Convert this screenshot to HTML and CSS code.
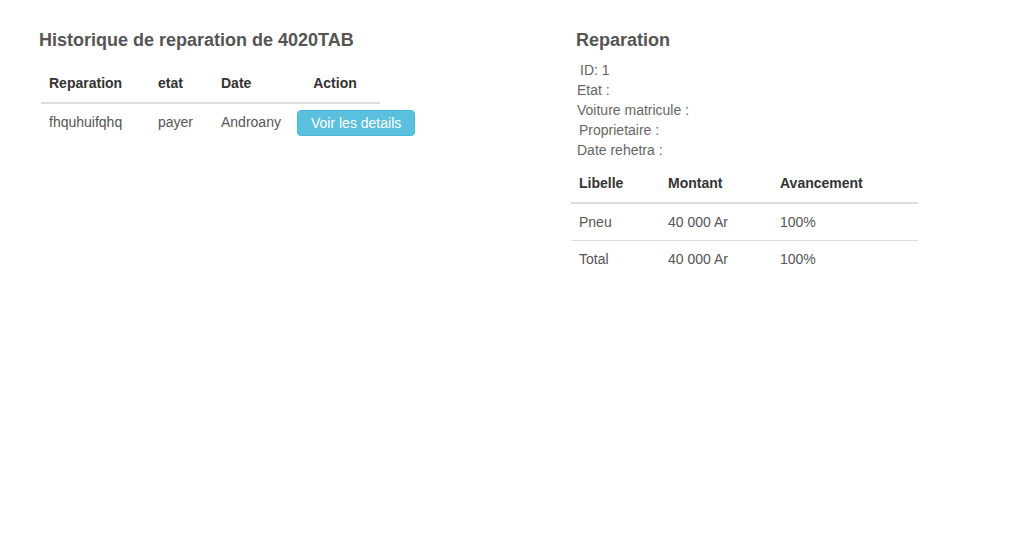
FILE: index.html
```html
<!DOCTYPE html>
<html lang="fr">
<head>
<meta charset="utf-8">
<title>Historique de reparation</title>
<link rel="stylesheet" href="styles.css">
</head>
<body>
<div class="page">
  <section class="col col-left">
    <h2 class="title title-left">Historique de reparation de 4020TAB</h2>
    <table class="tbl tbl-history">
      <colgroup>
        <col class="c1"><col class="c2"><col class="c3"><col class="c4">
      </colgroup>
      <thead>
        <tr><th>Reparation</th><th>etat</th><th>Date</th><th class="center">Action</th></tr>
      </thead>
      <tbody>
        <tr>
          <td>fhquhuifqhq</td>
          <td>payer</td>
          <td>Androany</td>
          <td><a class="btn-info" href="#">Voir les details</a></td>
        </tr>
      </tbody>
    </table>
  </section>
  <section class="col col-right">
    <h2 class="title title-right">Reparation</h2>
    <div class="info">
      <div class="line ind3">ID: 1</div>
      <div class="line">Etat :</div>
      <div class="line">Voiture matricule :</div>
      <div class="line ind2">Proprietaire :</div>
      <div class="line">Date rehetra :</div>
    </div>
    <table class="tbl tbl-detail">
      <colgroup>
        <col class="d1"><col class="d2"><col class="d3">
      </colgroup>
      <thead>
        <tr><th>Libelle</th><th>Montant</th><th>Avancement</th></tr>
      </thead>
      <tbody>
        <tr><td>Pneu</td><td>40 000 Ar</td><td>100%</td></tr>
        <tr class="sep"><td>Total</td><td>40 000 Ar</td><td>100%</td></tr>
      </tbody>
    </table>
  </section>
</div>
</body>
</html>
```

FILE: styles.css
```css
html, body {
  margin: 0;
  padding: 0;
  background: #fff;
}

body {
  font-family: "Liberation Sans", Arial, Helvetica, sans-serif;
  font-size: 14px;
  line-height: 20px;
  color: #555;
}

.page {
  display: flex;
  padding-top: 30px;
}

.col-left {
  flex: 0 0 571px;
  padding-left: 39px;
  box-sizing: border-box;
}

.col-right {
  flex: 1;
}

.title {
  margin: 0;
  font-size: 18px;
  line-height: 20px;
  font-weight: bold;
  color: #555;
}

.title-right {
  padding-left: 5px;
}

.tbl {
  border-collapse: collapse;
  table-layout: fixed;
}

.tbl th,
.tbl td {
  padding: 8px;
  text-align: left;
  vertical-align: top;
  white-space: nowrap;
}

.tbl th {
  color: #333;
  font-weight: bold;
  padding-bottom: 9px;
  border-bottom: 2px solid #ddd;
}

.tbl th.center {
  text-align: center;
}

.tbl-history {
  width: 339px;
  margin-top: 15px;
  margin-left: 2px;
}

.c1 { width: 109px; }
.c2 { width: 63px; }
.c3 { width: 77px; }
.c4 { width: 90px; }

.btn-info {
  display: inline-block;
  margin-top: -2px;
  margin-left: -1px;
  background: #5bc0de;
  border: 1px solid #46b8da;
  color: #fff;
  border-radius: 4px;
  padding: 2px 13px;
  font-size: 14px;
  line-height: 20px;
  text-decoration: none;
  white-space: nowrap;
}

.info {
  margin-top: 10px;
  padding-left: 6px;
  color: #666;
}

.line.ind3 { padding-left: 3px; }
.line.ind2 { padding-left: 2px; }

.tbl-detail {
  width: 347px;
  margin-top: 5px;
}

.d1 { width: 89px; }
.d2 { width: 112px; }
.d3 { width: 146px; }

.tbl-detail tr.sep td {
  border-top: 1px solid #ddd;
}
```
